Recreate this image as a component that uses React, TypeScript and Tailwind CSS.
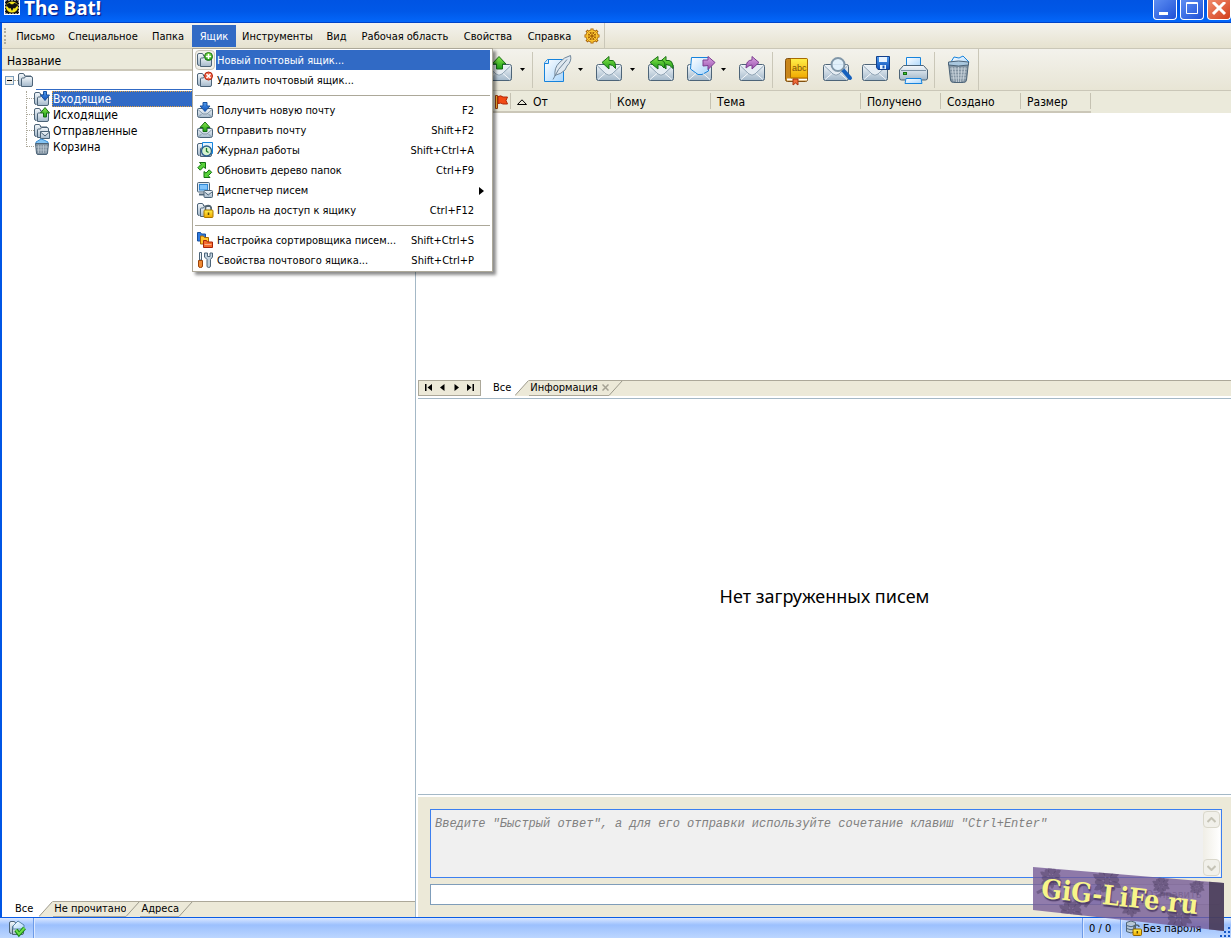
import { useState, type ReactNode } from "react"

const menuNames = [
  { name: "Письмо", width: "w-[53px]" },
  { name: "Специальное", width: "w-[82px]" },
  { name: "Папка", width: "w-[48px]" },
  { name: "Ящик", width: "w-[44px]" },
  { name: "Инструменты", width: "w-[83px]" },
  { name: "Вид", width: "w-[35px]" },
  { name: "Рабочая область", width: "w-[102px]" },
  { name: "Свойства", width: "w-[64px]" },
  { name: "Справка", width: "w-[59px]" },
]

const outline = "#4d6478"

function Gradients() {
  return (
    <svg width="0" height="0" className="absolute" aria-hidden="true">
      <defs>
        <linearGradient id="steel" x1="0" y1="0" x2="0" y2="1">
          <stop offset="0" stopColor="#f4f8fb" />
          <stop offset="1" stopColor="#a3b8ca" />
        </linearGradient>
        <linearGradient id="green" x1="0" y1="0" x2="0" y2="1">
          <stop offset="0" stopColor="#8bea4c" />
          <stop offset="1" stopColor="#1c9c17" />
        </linearGradient>
        <linearGradient id="blue" x1="0" y1="0" x2="0" y2="1">
          <stop offset="0" stopColor="#4f9cf0" />
          <stop offset="1" stopColor="#0d4db5" />
        </linearGradient>
        <linearGradient id="violet" x1="0" y1="0" x2="0" y2="1">
          <stop offset="0" stopColor="#dba6e4" />
          <stop offset="1" stopColor="#9b52ae" />
        </linearGradient>
        <linearGradient id="paper" x1="0" y1="0" x2="1" y2="1">
          <stop offset="0" stopColor="#ffffff" />
          <stop offset="1" stopColor="#a9d5fb" />
        </linearGradient>
        <linearGradient id="gold" x1="0" y1="0" x2="0" y2="1">
          <stop offset="0" stopColor="#fff04a" />
          <stop offset="1" stopColor="#f0a800" />
        </linearGradient>
      </defs>
    </svg>
  )
}

function Small({ children }: { children: ReactNode }) {
  return (
    <svg width="16" height="16" viewBox="0 0 16 16" fill="none" className="shrink-0 overflow-visible" aria-hidden="true">
      {children}
    </svg>
  )
}

function Big({ children }: { children: ReactNode }) {
  return (
    <svg width="30" height="30" viewBox="0 0 30 30" fill="none" className="shrink-0 overflow-visible" aria-hidden="true">
      {children}
    </svg>
  )
}

function FolderShape() {
  return (
    <g stroke={outline} fill="url(#steel)">
      <path d="M2.500 13.500q-2 0-2-1.500V3q0-1.500 1.500-1.500h3q1 0 1.500 1.500v1h6.500v2" />
      <path d="M3.500 14.500V7q0-1 1-1h2l1-1.500H13q1.500 0 1.500 1.500v7q0 1.500-1.500 1.500z" />
    </g>
  )
}

function SmallEnvelope() {
  return (
    <g stroke={outline} strokeLinejoin="round">
      <path d="M.5 7.500q0-1 1-1h13q1 0 1 1v6q0 2-2 2h-11q-2 0-2-2z" fill="url(#steel)" />
      <path d="M1 7.500l5 4.500h4l5-4.500M1.500 15l3-3M14.500 15l-3-3" stroke="#8398aa" />
    </g>
  )
}

const FolderIcon = () => <Small><FolderShape /></Small>
const FolderInIcon = () => (
  <Small>
    <FolderShape />
    <path d="M9.500.5h3V4h3L11 9.500 6.500 4h3z" fill="url(#blue)" stroke="#174f9c" />
  </Small>
)
const FolderOutIcon = () => (
  <Small>
    <FolderShape />
    <path d="M11 .5L15.500 6h-3v4h-3V6h-3z" fill="url(#green)" stroke="#176d15" />
  </Small>
)
const FolderSentIcon = () => (
  <Small>
    <FolderShape />
    <path d="M6.500 8.500h9v7h-9z" fill="url(#steel)" stroke={outline} />
    <path d="M6.500 9l4.500 4 4.500-4" stroke={outline} />
  </Small>
)
const TrashIcon = () => (
  <Small>
    <path d="M2 3l5-3 3 1 4 2v2H2z" fill="#83c4f4" stroke="#3a8fd6" />
    <path d="M1.500 4.500h13l-1 9.500q-.2 1.500-1.500 1.500H4q-1.300 0-1.500-1.500z" fill="#8293a1" stroke={outline} />
    <path d="M4.500 6v8M7 6v8M9.500 6v8M12 6v8M2 8h12M3 11h10" stroke="#c4d0d9" strokeWidth=".7" />
  </Small>
)
const FolderAddIcon = () => (
  <Small>
    <FolderShape />
    <circle cx="11.500" cy="4.500" r="4" fill="url(#green)" stroke="#1b6e19" />
    <path d="M11.500 2v5M9 4.500h5" stroke="#fff" strokeWidth="1.500" />
  </Small>
)
const FolderDeleteIcon = () => (
  <Small>
    <FolderShape />
    <circle cx="11.500" cy="4" r="4" fill="#f06548" stroke="#b3240d" />
    <path d="M9.500 2l4 4M13.500 2l-4 4" stroke="#fff" strokeWidth="1.500" />
  </Small>
)
const ReceiveIcon = () => (
  <Small>
    <SmallEnvelope />
    <path d="M6 .5h4v3.500h3L8 9.500 3 4h3z" fill="url(#blue)" stroke="#174f9c" />
  </Small>
)
const SendIcon = () => (
  <Small>
    <SmallEnvelope />
    <path d="M8 0l5 5.500h-3v4H6v-4H3z" fill="url(#green)" stroke="#176d15" />
  </Small>
)
const JournalIcon = () => (
  <Small>
    <FolderShape />
    <path d="M5.500.5h10v11h-10z" fill="#e4f3ff" stroke="#1585dd" />
    <circle cx="9.500" cy="9" r="5" fill="#d6f3ce" stroke="#295f8c" strokeWidth="1.300" />
    <path d="M9.500 6v3.200l2 1.300" stroke="#1c7a2b" strokeWidth="1.300" />
  </Small>
)
const RefreshIcon = () => (
  <Small>
    <path d="M2.500.5h6v6L6.500 4.900 3.300 8.200.8 5.700l3.400-3.400z" fill="#58d23b" stroke="#12720f" />
    <path d="M13 15.500H7v-6l2 1.600 3.200-3.300 2.500 2.500-3.400 3.400z" fill="#58d23b" stroke="#12720f" />
  </Small>
)
const DispatcherIcon = () => (
  <Small>
    <rect x=".5" y=".5" width="12" height="9.500" rx="1" fill="#dce8f2" stroke={outline} />
    <rect x="2.500" y="2.500" width="8" height="5.500" fill="#7fc3fb" stroke="#2f87d5" />
    <path d="M2 12.500h6" stroke={outline} strokeWidth="2" />
    <rect x="7" y="8.500" width="8.500" height="7" rx="1" fill="url(#steel)" stroke={outline} />
    <path d="M7.500 10l3.700 3 3.800-3" stroke={outline} />
  </Small>
)
const FolderLockIcon = () => (
  <Small>
    <FolderShape />
    <path d="M8.500 8V6q0-2.500 2.700-2.500T14 6v2" stroke="#53646f" strokeWidth="1.500" />
    <rect x="7" y="8" width="9" height="7.500" rx="1" fill="url(#gold)" stroke="#a97700" />
    <path d="M11.500 10.500v2.500" stroke="#5f4a00" strokeWidth="1.500" />
  </Small>
)
const SorterIcon = () => (
  <Small>
    <path d="M.5 9V.5h3l1 1.500h4V9z" fill="#2f7ae0" stroke="#174f9c" />
    <path d="M3.500 12V4h3l1 1.500h4V12z" fill="#ffc52e" stroke="#a86500" />
    <path d="M6.500 15.500V8.500h3l1 1.500h5v5.500z" fill="#f46a2b" stroke="#a8230a" />
    <path d="M7.500 12.500h7" stroke="#fbb08a" />
  </Small>
)
const ToolsIcon = () => (
  <Small>
    <path d="M2.500.5h2V8h-2z" fill="#eef3f7" stroke={outline} />
    <path d="M1.500 8.500h4V14q0 1.500-2 1.500t-2-1.500z" fill="#f08a35" stroke="#9c4408" />
    <path d="M7.500 1v4L10 7.500V14q0 1.500 1.700 1.500T13.500 14V7.500L15.500 5V1L13 1v3.500h-2.500V1z" fill="#bfd0de" stroke={outline} />
  </Small>
)

function ToolEnvelope() {
  return (
    <g strokeLinejoin="round">
      <rect x="2.500" y="9.500" width="25" height="16" rx="2" fill="url(#steel)" stroke={outline} />
      <path d="M3.500 11l8.500 8q3 2.500 6 0l8.500-8" fill="#e6edf3" stroke="#8fa3b4" />
      <path d="M4 24.500l7-6M26 24.500l-7-6" stroke="#f4f7fa" />
    </g>
  )
}

const BigReceive = () => (
  <Big>
    <ToolEnvelope />
    <path d="M12 2h6v6h4l-7 7-7-7h4z" fill="url(#blue)" stroke="#174f9c" />
  </Big>
)
const BigSend = () => (
  <Big>
    <ToolEnvelope />
    <path d="M15 1.500L22 9h-3.500v5h-6V9H8z" fill="url(#green)" stroke="#176d15" />
  </Big>
)
const BigCompose = () => (
  <Big>
    <path d="M5.500 4.500h16v22h-19V8z" fill="url(#paper)" stroke="#1683dc" />
    <path d="M2.500 8.500h4v-4" fill="#d7ecfd" stroke="#1683dc" />
    <path d="M13 21q-1-8 4-13Q22 2 28.500.5 30 6 25 11l-2 4q-4 4-9 5z" fill="#dfe8f0" stroke="#71879b" />
    <path d="M11 24.500q4-10 14-20" stroke="#71879b" />
  </Big>
)
const BigReply = () => (
  <Big>
    <ToolEnvelope />
    <path d="M8 7.500l7-6v4h3q3 0 3.500 5v3Q19 9.500 15 9.500V14z" fill="url(#green)" stroke="#176d15" />
  </Big>
)
const BigReplyAll = () => (
  <Big>
    <ToolEnvelope />
    <path d="M13 7.500l7-6v4h3q3 0 4 5v3q-3-4-7-4V14z" fill="url(#green)" stroke="#176d15" />
    <path d="M4 7.500l8-6v4h4q2 0 3 3.500l-1 4q-2-3.500-6-3.500V14z" fill="url(#green)" stroke="#176d15" />
  </Big>
)
const BigForward = () => (
  <Big>
    <rect x="2.500" y="9.500" width="24" height="16" rx="2" fill="url(#steel)" stroke={outline} />
    <path d="M6.500 2.500h17V16l-6.500 3.500h-4L5.500 14z" fill="url(#paper)" stroke="#1683dc" />
    <path d="M4 24.500l7-6M25 24.500l-7-6" stroke="#f4f7fa" />
    <path d="M30 7.500l-7-6v3.500h-5v6l5-.5v4z" fill="url(#violet)" stroke="#7d3e90" />
  </Big>
)
const BigRedirect = () => (
  <Big>
    <ToolEnvelope />
    <path d="M22 7.500l-7-6v3.500q-6 0-6 8 3-3 6-3v4z" fill="url(#violet)" stroke="#7d3e90" />
  </Big>
)
const BigBook = () => (
  <Big>
    <rect x="3.500" y="3.500" width="22" height="23" rx="2" fill="#c9861b" stroke="#805010" />
    <path d="M5 24.500h20" stroke="#fff" strokeWidth="2" />
    <rect x="8.500" y="3.500" width="17" height="19.500" rx="1" fill="url(#gold)" stroke="#a86b00" />
    <text x="10" y="16" fontSize="9" fontFamily="Liberation Sans" fill="#80500b">abc</text>
    <path d="M11 24v6l2.500-2 2.500 2v-6z" fill="#ef6a36" stroke="#a83510" />
  </Big>
)
const BigSearch = () => (
  <Big>
    <ToolEnvelope />
    <path d="M22 15l7 8" stroke="#1560bd" strokeWidth="4" strokeLinecap="round" />
    <circle cx="17" cy="9.500" r="6.500" fill="#dff0fc" fillOpacity=".9" stroke="#8197a8" strokeWidth="2" />
  </Big>
)
const BigSave = () => (
  <Big>
    <ToolEnvelope />
    <path d="M16.500 1.500h13v13H18l-1.500-2z" fill="url(#blue)" stroke="#123f8a" />
    <path d="M19 2h8v5h-8zM20 10h6v4h-6z" fill="#e7f3ff" />
    <path d="M23.500 10.500v3" stroke="#1758b8" strokeWidth="2" />
  </Big>
)
const BigPrint = () => (
  <Big>
    <path d="M7.500 2.500h14V12h-14z" fill="url(#paper)" stroke="#1683dc" />
    <path d="M4.500 10.500h20L28.500 15v8q0 2-2 2h-24q-2 0-2-2v-8z" fill="url(#steel)" stroke={outline} />
    <path d="M2 15.500h25" stroke="#7d92a4" />
    <rect x="4.500" y="17.500" width="3" height="2" fill="#42d02e" stroke="#176d15" />
    <path d="M7 23.500h15l1 5H6z" fill="url(#paper)" stroke="#1683dc" />
  </Big>
)
const BigTrash = () => (
  <Big>
    <path d="M7 7l3-5 5 1 4-2 6 6-2 3H8z" fill="url(#paper)" stroke="#1683dc" />
    <path d="M4.500 7.500h20L22.500 25q-.3 2.500-3 2.500h-10Q6.800 27.500 6.500 25z" fill="#8394a2" stroke={outline} />
    <path d="M4.500 7q10-2 20 0v3q-10 2-20 0z" fill="#a9c7de" stroke={outline} />
    <path
      d="M8 12l2 14M11 12l1.500 15M14.500 12v15M18 12l-1.500 15M21 12l-2 14M6 14h17M6.500 17h16M7 20h15M7 23h15"
      stroke="#ced8e0"
      strokeWidth=".8"
    />
  </Big>
)

type MenuEntry = { label: string; keys?: string; icon: ReactNode; submenu?: boolean } | null

const boxMenu: MenuEntry[] = [
  { label: "Новый почтовый ящик...", icon: <FolderAddIcon /> },
  { label: "Удалить почтовый ящик...", icon: <FolderDeleteIcon /> },
  null,
  { label: "Получить новую почту", keys: "F2", icon: <ReceiveIcon /> },
  { label: "Отправить почту", keys: "Shift+F2", icon: <SendIcon /> },
  { label: "Журнал работы", keys: "Shift+Ctrl+A", icon: <JournalIcon /> },
  { label: "Обновить дерево папок", keys: "Ctrl+F9", icon: <RefreshIcon /> },
  { label: "Диспетчер писем", icon: <DispatcherIcon />, submenu: true },
  { label: "Пароль на доступ к ящику", keys: "Ctrl+F12", icon: <FolderLockIcon /> },
  null,
  { label: "Настройка сортировщика писем...", keys: "Shift+Ctrl+S", icon: <SorterIcon /> },
  { label: "Свойства почтового ящика...", keys: "Shift+Ctrl+P", icon: <ToolsIcon /> },
]

function BoxMenu() {
  const [active, setActive] = useState(0)

  return (
    <div
      role="menu"
      className="absolute left-0 top-full z-20 w-[301px] border border-[#aca899] bg-white px-[2px] py-px shadow-[3px_3px_3px_rgba(0,0,0,0.45)]"
    >
      {boxMenu.map((entry, i) =>
        entry ? (
          <button
            key={entry.label}
            role="menuitem"
            onMouseEnter={() => setActive(i)}
            className="flex h-5 w-full items-center text-left"
          >
            <span
              className={
                i === active
                  ? "flex h-5 w-5 items-center justify-center rounded-sm border border-[#c9c6ba] bg-[#f1f0ea]"
                  : "flex h-5 w-5 items-center justify-center"
              }
            >
              {entry.icon}
            </span>
            <span
              className={
                i === active
                  ? "ml-px flex h-5 flex-1 items-center bg-[#316ac5] pt-[2px] pl-px text-white"
                  : "ml-px flex h-5 flex-1 items-center pt-[2px] pl-px"
              }
            >
              {entry.label}
              <span className="ml-auto pr-4">{entry.keys}</span>
              {entry.submenu && (
                <svg width="5" height="8" viewBox="0 0 5 8" className="mr-[6px]" aria-hidden="true">
                  <path d="M0 0l5 4-5 4z" fill="#000" />
                </svg>
              )}
            </span>
          </button>
        ) : (
          <div key={i} className="flex h-[10px] items-center">
            <hr className="w-full border-[#aca899]" />
          </div>
        ),
      )}
    </div>
  )
}

function TitleBar() {
  const control = "flex h-5 w-6 items-center justify-center rounded-b border border-t-0 border-white"

  return (
    <header className="flex h-[23px] shrink-0 items-start bg-linear-to-b from-[#0054e3] via-[#0058e8] to-[#0468fb] shadow-[inset_0_-1px_0_#0043c8]">
      <svg width="16" height="16" viewBox="0 0 16 16" className="ml-1" aria-hidden="true">
        <path d="M0 0h16v15H0z" fill="#fff" />
        <path d="M1 0h14v14H1z" fill="#111" strokeDasharray="2 1" stroke="#fff" />
        <ellipse cx="8" cy="7" rx="6" ry="5.500" fill="#f4e51c" />
        <path d="M2 6q1-3 4-3l1 1.500 1-.5 1 .5L10 3q3 0 4 3-2 0-3 2.500L9.500 8 8 11 6.500 8 5 8.500Q4 6 2 6z" fill="#111" />
      </svg>
      <h1 className="ml-1 font-['Noto_Sans'] text-[19px] leading-[17px] font-bold text-white [text-shadow:1px_1px_1px_#0a1883]">
        The Bat!
      </h1>
      <div className="ml-auto flex gap-[3px]">
        <button aria-label="Свернуть" className={`${control} bg-linear-to-br from-[#5d8df2] to-[#1f4fd6]`}>
          <svg width="16" height="16" viewBox="0 0 16 16" aria-hidden="true">
            <path d="M2 10h9v3H2z" fill="#fff" />
          </svg>
        </button>
        <button aria-label="Развернуть" className={`${control} bg-linear-to-br from-[#5d8df2] to-[#1f4fd6]`}>
          <svg width="16" height="16" viewBox="0 0 16 16" fill="none" aria-hidden="true">
            <path d="M2.500.5h11v11h-11zM2 1.500h12" stroke="#fff" />
          </svg>
        </button>
        <button aria-label="Закрыть" className={`${control} bg-linear-to-br from-[#f08a6c] to-[#d23a12]`}>
          <svg width="16" height="16" viewBox="0 0 16 16" fill="none" aria-hidden="true">
            <path d="M2 0l12 12M14 0L2 12" stroke="#fff" strokeWidth="3" />
          </svg>
        </button>
      </div>
    </header>
  )
}

function MenuBar() {
  return (
    <nav className="flex h-[26px] shrink-0 border-b border-[#cac7b8] bg-linear-to-b from-[#f4f3ee] to-[#e6e2cf]">
      <div className="flex items-center border-r border-[#cac7b8] pr-[3px]">
        <div className="mx-[2px] h-4 w-[3px] border-l-2 border-dotted border-[#b0ad9f]" />
        {menuNames.map(({ name, width }) =>
          name === "Ящик" ? (
            <div key={name} className={`relative flex h-full items-center ${width}`}>
              <button className="h-[22px] w-full bg-[#316ac5] pt-[2px] text-center text-white">{name}</button>
              <BoxMenu />
            </div>
          ) : (
            <button key={name} className={`h-[22px] pt-[2px] text-center whitespace-nowrap ${width}`}>
              {name}
            </button>
          ),
        )}
        <button aria-label="Настройка" className="ml-1 flex w-[18px] justify-center">
          <svg width="16" height="16" viewBox="0 0 16 16" fill="none" aria-hidden="true">
            <path d="M8 .5v15M.5 8h15M2.500 2.500l11 11M13.500 2.500l-11 11" stroke="#a86408" strokeWidth="3" />
            <circle cx="8" cy="8" r="5" stroke="#a86408" strokeWidth="3" />
            <circle cx="8" cy="8" r="5" stroke="#ffc933" strokeWidth="1.500" />
            <path d="M8 1v14M1 8h14M3 3l10 10M13 3L3 13" stroke="#ffc933" />
            <circle cx="8" cy="8" r="1.500" fill="#a86408" />
          </svg>
        </button>
      </div>
    </nav>
  )
}

function ToolButton({ label, icon, arrow }: { label: string; icon: ReactNode; arrow?: boolean }) {
  return (
    <div className="flex h-full">
      <button aria-label={label} className="flex w-[39px] items-center justify-center">
        {icon}
      </button>
      {arrow && (
        <button aria-label={`${label}: варианты`} className="flex w-[13px] items-center justify-start pl-[2px]">
          <svg width="5" height="3" viewBox="0 0 5 3" aria-hidden="true">
            <path d="M0 0h5L2.500 3z" fill="#000" />
          </svg>
        </button>
      )}
    </div>
  )
}

const ToolSeparator = () => <div className="mr-[3px] ml-px h-9 w-[2px] border-l border-[#cac7b8]" />

function Toolbar() {
  return (
    <div className="flex h-[42px] shrink-0 border-b border-[#cac7b8] bg-linear-to-b from-[#f3f2ec] to-[#e8e5d5]">
      <div className="flex items-center border-r border-[#cac7b8] pl-[9px]">
        <ToolButton label="Получить" icon={<BigReceive />} arrow />
        <ToolButton label="Отправить" icon={<BigSend />} arrow />
        <ToolSeparator />
        <ToolButton label="Создать" icon={<BigCompose />} arrow />
        <ToolButton label="Ответить" icon={<BigReply />} arrow />
        <ToolButton label="Ответить всем" icon={<BigReplyAll />} />
        <ToolButton label="Переслать" icon={<BigForward />} arrow />
        <ToolButton label="Перенаправить" icon={<BigRedirect />} />
        <ToolSeparator />
        <ToolButton label="Адресная книга" icon={<BigBook />} />
        <ToolButton label="Поиск" icon={<BigSearch />} />
        <ToolButton label="Сохранить" icon={<BigSave />} />
        <ToolButton label="Печать" icon={<BigPrint />} />
        <ToolSeparator />
        <ToolButton label="Удалить" icon={<BigTrash />} />
      </div>
    </div>
  )
}

// slanted edge between two tabs; the left half keeps the colour of the tab it closes
function TabEdge({ active }: { active?: boolean }) {
  return (
    <svg width="14" height="16" viewBox="0 0 14 16" fill="none" className="shrink-0" aria-hidden="true">
      <path d="M0 0h14v16H0z" fill="#ece9d8" />
      {active && <path d="M0 0h14L0 15.500z" fill="#fff" />}
      <path d="M0 15.500L13.500.5" stroke="#9d9a8c" />
      {!active && <path d="M0 .5h14" stroke="#aca899" />}
    </svg>
  )
}

const folders = [
  { name: "Входящие", icon: <FolderInIcon />, selected: true },
  { name: "Исходящие", icon: <FolderOutIcon /> },
  { name: "Отправленные", icon: <FolderSentIcon /> },
  { name: "Корзина", icon: <TrashIcon /> },
]

const inactiveTab = "h-4 border-y border-[#aca899] bg-[#ece9d8] pl-px leading-[14px]"

function FolderPane() {
  return (
    <aside className="flex w-[414px] shrink-0 flex-col border-r border-[#a4b8c6]">
      <div className="h-[22px] shrink-0 border-b-2 border-[#cbc7b8] bg-[#ebeadb] pl-[5px] text-xs leading-6">Название</div>
      <div className="flex-1 pt-px text-xs leading-[17px]">
        <div className="flex h-[18px]">
          <button aria-label="Свернуть ящик" className="mt-1 ml-[3px] flex h-[9px] w-[9px] items-center justify-center border border-[#7b9ebd] bg-[#f3f1ea]">
            <span className="h-px w-[5px] bg-black" />
          </button>
          <span className="mt-2 w-1 border-t border-dotted border-[#aca899]" />
          <FolderIcon />
          <span className="ml-[2px] flex-1 border-b border-[#316ac5]" />
        </div>
        <ul className="ml-6 pt-px">
          {folders.map((folder, i) => (
            <li key={folder.name} className="flex h-4">
              <span
                className={
                  i === folders.length - 1
                    ? "h-2 w-[8px] border-b border-l border-dotted border-[#aca899]"
                    : "h-4 w-px border-l border-dotted border-[#aca899]"
                }
              />
              {i < folders.length - 1 && <span className="mt-[7px] w-[7px] border-t border-dotted border-[#aca899]" />}
              {folder.icon}
              <a
                href="#folder"
                className={
                  folder.selected
                    ? "ml-[2px] flex-1 bg-[#316ac5] pl-px text-white outline-1 -outline-offset-1 outline-dotted outline-[#e0a040]"
                    : "ml-[2px] flex-1 pl-px"
                }
              >
                {folder.name}
              </a>
            </li>
          ))}
        </ul>
      </div>
      <div className="flex h-4 shrink-0 bg-[#ece9d8]">
        <button className="h-4 bg-white pr-[6px] pl-[13px]">Все</button>
        <TabEdge active />
        <button className={inactiveTab}>Не прочитано</button>
        <TabEdge />
        <button className={inactiveTab}>Адреса</button>
        <TabEdge />
        <div className="flex-1 border-t border-[#aca899]" />
      </div>
    </aside>
  )
}

const columns = [
  { name: "Кому", width: "w-[100px]" },
  { name: "Тема", width: "w-[150px]" },
  { name: "Получено", width: "w-[80px]" },
  { name: "Создано", width: "w-[80px]" },
  { name: "Размер", width: "w-[70px]" },
]

function MessageList() {
  const cell = "h-[22px] border-b-2 border-[#cbc7b8] p-0 text-left font-normal"
  const label = "flex h-4 items-center border-r border-[#c5c2b2] pt-px pl-[6px]"

  return (
    <div className="min-h-0 flex-[289] basis-0">
      <table className="w-full table-fixed border-separate border-spacing-0 bg-[#ebeadb] text-xs">
        <thead>
          <tr>
            <th className={`${cell} w-[93px]`}>
              <div className={label}>
                <svg width="13" height="14" viewBox="0 0 13 14" className="mr-[2px] ml-auto" aria-label="Флажок">
                  <path d="M.5.500h2v13h-2z" fill="#ffb62e" stroke="#9c3c10" />
                  <path d="M3 1.500q3-1.500 5 .5h4.500L11 5.500 12.500 9H8Q6 7.500 3 8.500z" fill="#f24a14" stroke="#b02808" />
                </svg>
              </div>
            </th>
            <th className={`${cell} w-[100px]`}>
              <div className={label}>
                <svg width="10" height="6" viewBox="0 0 10 6" fill="none" className="mr-[6px]" aria-hidden="true">
                  <path d="M.5 5.500L5 .8l4.500 4.700z" stroke="#000" />
                </svg>
                От
              </div>
            </th>
            {columns.map((column) => (
              <th key={column.name} className={`${cell} ${column.width}`}>
                <div className={label}>{column.name}</div>
              </th>
            ))}
            <th className="p-0" />
          </tr>
        </thead>
      </table>
    </div>
  )
}

const navPaths = [
  { label: "Первая", d: "M0 0h1.500v7H0zM7 0v7L2.500 3.500z" },
  { label: "Назад", d: "M5.500 0v7L1 3.500z" },
  { label: "Вперёд", d: "M1.500 0v7L6 3.500z" },
  { label: "Последняя", d: "M5.500 0H7v7H5.500zM0 0v7l4.500-3.500z" },
]

function PreviewTabs() {
  return (
    <div className="h-[19px] shrink-0 border-b border-[#a4b8c6]">
      <div className="flex h-4 bg-[#ece9d8]">
        <div className="flex w-[63px] items-center justify-around border border-[#aca899] px-[3px]">
          {navPaths.map((nav) => (
            <button key={nav.label} aria-label={nav.label}>
              <svg width="7" height="7" viewBox="0 0 7 7" aria-hidden="true">
                <path d={nav.d} fill="#000" />
              </svg>
            </button>
          ))}
        </div>
        <button className="h-4 bg-white pr-1 pl-3">Все</button>
        <TabEdge active />
        <button className={`${inactiveTab} flex items-center`}>
          Информация
          <svg width="7" height="7" viewBox="0 0 7 7" fill="none" className="ml-[4px]" aria-hidden="true">
            <path d="M.5.5l6 6M6.500.5l-6 6" stroke="#a5a294" strokeWidth="1.500" />
          </svg>
        </button>
        <TabEdge />
        <div className="flex-1 border-t border-[#aca899]" />
      </div>
    </div>
  )
}

function QuickReply() {
  const scroll = "flex h-[17px] items-center justify-center rounded-sm border border-[#d9d7cb] bg-[#f1f0ea]"

  return (
    <form className="relative mt-[2px] flex shrink-0 flex-col gap-[6px] bg-[#ece9d8] pt-3 pr-[9px] pb-3 pl-3" onSubmit={(e) => e.preventDefault()}>
      <div className="flex h-[69px] border border-[#3c7ff0] bg-[#f0f0f0]">
        <textarea
          aria-label="Быстрый ответ"
          placeholder={'Введите "Быстрый ответ", а для его отправки используйте сочетание клавиш "Ctrl+Enter"'}
          className="h-full flex-1 resize-none overflow-hidden bg-transparent px-1 pt-[6px] font-['Liberation_Mono',monospace] text-xs leading-4 italic outline-none placeholder:text-[#808080]"
        />
        <div className="my-px mr-px flex w-[17px] flex-col justify-between bg-linear-to-r from-[#f0eee6] to-white">
          <button type="button" aria-label="Вверх" className={scroll}>
            <svg width="9" height="6" viewBox="0 0 9 6" fill="none"><path d="M.5 5l4-4 4 4" stroke="#c5c3b6" strokeWidth="2" /></svg>
          </button>
          <button type="button" aria-label="Вниз" className={scroll}>
            <svg width="9" height="6" viewBox="0 0 9 6" fill="none"><path d="M.5 1l4 4 4-4" stroke="#c5c3b6" strokeWidth="2" /></svg>
          </button>
        </div>
      </div>
      <div className="flex h-[21px] gap-2">
        <div className="flex flex-1 border border-[#7f9db9] bg-white">
          <select aria-label="Шаблон" className="h-full flex-1 appearance-none outline-none" />
          <span className="flex w-[17px] items-center justify-center bg-[#c3d3fb]">
            <svg width="9" height="6" viewBox="0 0 9 6" fill="none" aria-hidden="true"><path d="M.5 1l4 4 4-4" stroke="#4d6185" strokeWidth="2" /></svg>
          </span>
        </div>
        <button disabled className="flex w-[113px] items-center justify-center rounded-sm border border-[#c9c7ba] bg-[#f5f4ea] pt-px pl-4 text-[#8a8a7c]">
          Отправить
        </button>
      </div>
      <Watermark />
    </form>
  )
}

function Flower({ x, y, r }: { x: number; y: number; r: number }) {
  return (
    <g transform={`translate(${x} ${y}) scale(${r / 10})`} fill="#4a3a5e" fillOpacity=".45">
      {[0, 60, 120, 180, 240, 300].map((angle) => (
        <path key={angle} d="M0-2q-6-5-1-10 2 2 2 4 3-2 4 1 0 3-5 5z" transform={`rotate(${angle})`} />
      ))}
      <circle r="2.500" />
    </g>
  )
}

function Watermark() {
  return (
    <div className="pointer-events-none absolute top-[70px] right-[6px] z-10 h-16 w-[192px]">
      <svg width="192" height="66" viewBox="0 0 192 66" aria-hidden="true">
        <clipPath id="banner">
          <path d="M0 0l191 16v48L0 43z" />
        </clipPath>
        <g clipPath="url(#banner)">
          <path d="M0 0h192v66H0z" fill="#765b97" fillOpacity=".8" />
          <Flower x={18} y={10} r={10} />
          <Flower x={74} y={14} r={13} />
          <Flower x={38} y={44} r={11} />
          <Flower x={98} y={40} r={9} />
          <Flower x={128} y={18} r={8} />
          <Flower x={164} y={20} r={7} />
          <Flower x={146} y={50} r={12} />
          <path d="M52 40q10-16 24-6t20-8M4 26q12-8 18 4M118 34q14-14 30 0" stroke="#4a3a5e" strokeOpacity=".45" strokeWidth="3" fill="none" />
          <path d="M176 0h16v66h-16z" fill="#3f354c" fillOpacity=".75" />
        </g>
      </svg>
      <span className="absolute top-[12px] left-[8px] rotate-6 font-['DejaVu_Serif_Condensed','DejaVu_Serif',serif] text-[27px] leading-9 font-bold whitespace-nowrap text-[#f7f58a] [text-shadow:1px_2px_1px_#4f3d68]">
        GiG-LiFe.ru
      </span>
    </div>
  )
}

function StatusBar() {
  const divider = "border-l border-[#6d9be8] shadow-[inset_1px_0_0_#dbe8ff]"

  return (
    <footer className="flex h-[21px] shrink-0 items-stretch border-t border-[#0a5ce6] bg-linear-to-b from-[#dbe8ff] via-[#9cc0fd] via-35% to-[#bcd6ff]">
      <div className="flex w-[33px] items-center pl-[9px]">
        <Small>
          <FolderShape />
          <path d="M4 6l5-5 6 4v4H4z" fill="url(#paper)" stroke="#5b87ab" />
          <path d="M7 10l3 4 5.500-6" stroke="#148a12" strokeWidth="4" />
          <path d="M7 10l3 4 5.500-6" stroke="#6ede4a" strokeWidth="2" />
        </Small>
      </div>
      <div className={`flex-1 ${divider}`} />
      <div className={`flex w-[38px] items-center pt-[2px] pl-[6px] ${divider}`}>0 / 0</div>
      <div className={`flex w-[111px] items-center gap-px pl-[5px] ${divider}`}>
        <Small>
          <path d="M.5 2.500q4.500-3 9 0v9q-4.500 3-9 0zM.5 5.500q4.500 2.500 9 0M.5 8.500q4.500 2.500 9 0" fill="#b9c8d4" stroke={outline} />
          <path d="M8 9V7q0-2 2.500-2T13 7" stroke="#53646f" strokeWidth="1.500" />
          <rect x="7" y="9" width="8.500" height="6.500" rx="1" fill="url(#gold)" stroke="#8d6400" />
          <path d="M11.300 11v2.500" stroke="#5f4a00" strokeWidth="1.500" />
        </Small>
        <span className="pt-[2px] whitespace-nowrap">Без пароля</span>
        <svg width="11" height="11" viewBox="0 0 11 11" className="ml-auto self-end" aria-hidden="true">
          <path d="M8 0h2v2H8zM4 4h2v2H4zM8 4h2v2H8zM0 8h2v2H0zM4 8h2v2H4zM8 8h2v2H8z" fill="#1759c9" />
        </svg>
      </div>
    </footer>
  )
}

export default function App() {
  return (
    <div className="flex h-screen flex-col bg-white font-['DejaVu_Sans_Condensed','DejaVu_Sans',sans-serif] text-[11px] leading-4 text-black">
      <Gradients />
      <TitleBar />
      <div className="flex min-h-0 flex-1 flex-col border-l-2 border-[#0055e5]">
        <MenuBar />
        <div className="flex min-h-0 flex-1 gap-[2px]">
          <FolderPane />
          <main className="flex min-w-0 flex-1 flex-col">
            <Toolbar />
            <MessageList />
            <PreviewTabs />
            <section className="flex min-h-0 flex-[396] basis-0 items-center justify-center border-b border-[#a4b8c6]">
              <p className="font-['Noto_Sans',sans-serif] text-lg">Нет загруженных писем</p>
            </section>
            <QuickReply />
          </main>
        </div>
      </div>
      <StatusBar />
    </div>
  )
}
